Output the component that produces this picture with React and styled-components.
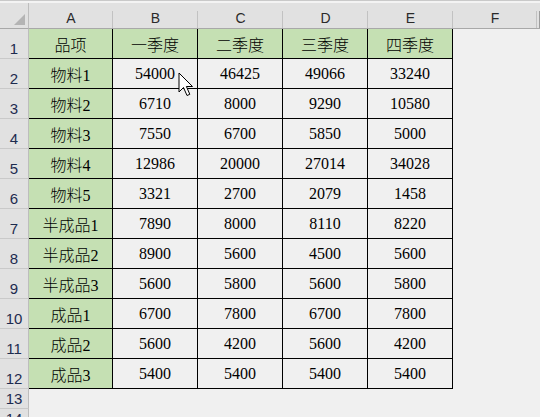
import React from 'react';
import styled, { createGlobalStyle } from 'styled-components';

const GlobalStyle = createGlobalStyle`
  html, body {
    margin: 0;
    padding: 0;
    background: #f0f0f0;
    overflow: hidden;
  }
`;

const Page = styled.div`
  position: relative;
  width: 540px;
  height: 417px;
  overflow: hidden;
  background: #f0f0f0;
`;

const TopEdge = styled.div`
  height: 2px;
  background: #f3f3f3;
  border-top: 1px solid #c9c9c9;
`;

const Sheet = styled.div`
  display: grid;
  grid-template-columns: 29px 84px 85px 85px 85px 85px 84px 1fr;
  grid-template-rows: 26px repeat(12, 30px) 20px 20px;
`;

const Corner = styled.div`
  position: relative;
  background: #e1e1e1;
  border-right: 1px solid #bdbdbd;
  border-bottom: 1px solid #a8a8a8;
  display: flex;
  align-items: flex-end;
  justify-content: flex-end;
  padding: 0 3px 3px 0;
  box-sizing: border-box;
`;

const ColHead = styled.div`
  position: relative;
  background: #e1e1e1;
  border-bottom: 1px solid #a8a8a8;
  box-sizing: border-box;
  display: flex;
  align-items: flex-end;
  justify-content: center;
  padding-bottom: 2px;
  font-family: "Liberation Sans", Arial, sans-serif;
  font-size: 14px;
  color: #2a2a2a;

  &::after {
    content: '';
    position: absolute;
    right: 0;
    top: 8px;
    bottom: 0;
    width: 1px;
    background: ${(p) => (p.$edge ? '#9c9c9c' : '#c2c2c2')};
  }
`;

const RowHead = styled.div`
  background: #e1e1e1;
  border-right: 1px solid #bdbdbd;
  border-bottom: 1px solid #c9c9c9;
  box-sizing: border-box;
  display: flex;
  align-items: flex-end;
  justify-content: center;
  padding-bottom: 1px;
  font-family: "Liberation Sans", Arial, sans-serif;
  font-size: 15px;
  color: #1d2b4f;
`;

const Cell = styled.div`
  background: ${(p) => (p.$label ? '#c5e0b3' : '#f0f0f0')};
  border-right: 1px solid #000;
  border-bottom: 1px solid #000;
  box-sizing: border-box;
  display: flex;
  align-items: center;
  justify-content: center;
  font-family: "Liberation Serif", "Noto Sans CJK SC", serif;
  font-size: 16px;
  font-weight: 300;
  color: #000;
`;

const Blank = styled.div`
  background: #f0f0f0;
`;

const Pointer = styled.svg`
  position: absolute;
  left: 178px;
  top: 72px;
`;

const columns = ['A', 'B', 'C', 'D', 'E', 'F'];

const rows = [
  ['品项', '一季度', '二季度', '三季度', '四季度'],
  ['物料1', '54000', '46425', '49066', '33240'],
  ['物料2', '6710', '8000', '9290', '10580'],
  ['物料3', '7550', '6700', '5850', '5000'],
  ['物料4', '12986', '20000', '27014', '34028'],
  ['物料5', '3321', '2700', '2079', '1458'],
  ['半成品1', '7890', '8000', '8110', '8220'],
  ['半成品2', '8900', '5600', '4500', '5600'],
  ['半成品3', '5600', '5800', '5600', '5800'],
  ['成品1', '6700', '7800', '6700', '7800'],
  ['成品2', '5600', '4200', '5600', '4200'],
  ['成品3', '5400', '5400', '5400', '5400'],
];

const App = () => (
  <Page>
    <GlobalStyle />
    <TopEdge />
    <Sheet>
      <Corner>
        <svg width="11" height="11" viewBox="0 0 11 11">
          <polygon points="11,0 11,11 0,11" fill="#b4b4b4" />
        </svg>
      </Corner>
      {columns.map((c) => (
        <ColHead key={c}>{c}</ColHead>
      ))}
      <ColHead $edge />

      {rows.map((row, i) => (
        <React.Fragment key={i}>
          <RowHead>{i + 1}</RowHead>
          {row.map((v, j) => (
            <Cell key={j} $label={i === 0 || j === 0}>{v}</Cell>
          ))}
          <Blank />
          <Blank />
        </React.Fragment>
      ))}

      {[13, 14].map((n) => (
        <React.Fragment key={n}>
          <RowHead>{n}</RowHead>
          {[0, 1, 2, 3, 4, 5, 6].map((k) => (
            <Blank key={k} />
          ))}
        </React.Fragment>
      ))}
    </Sheet>
    <Pointer width="16" height="26" viewBox="0 0 16 26">
      <path
        d="M1 1 L1 20 L5.5 15.5 L9 23.5 L11.8 22.3 L8.4 14.5 L14.5 14.5 Z"
        fill="#fff"
        stroke="#000"
        strokeWidth="1"
        strokeLinejoin="miter"
      />
    </Pointer>
  </Page>
);

export default App;
